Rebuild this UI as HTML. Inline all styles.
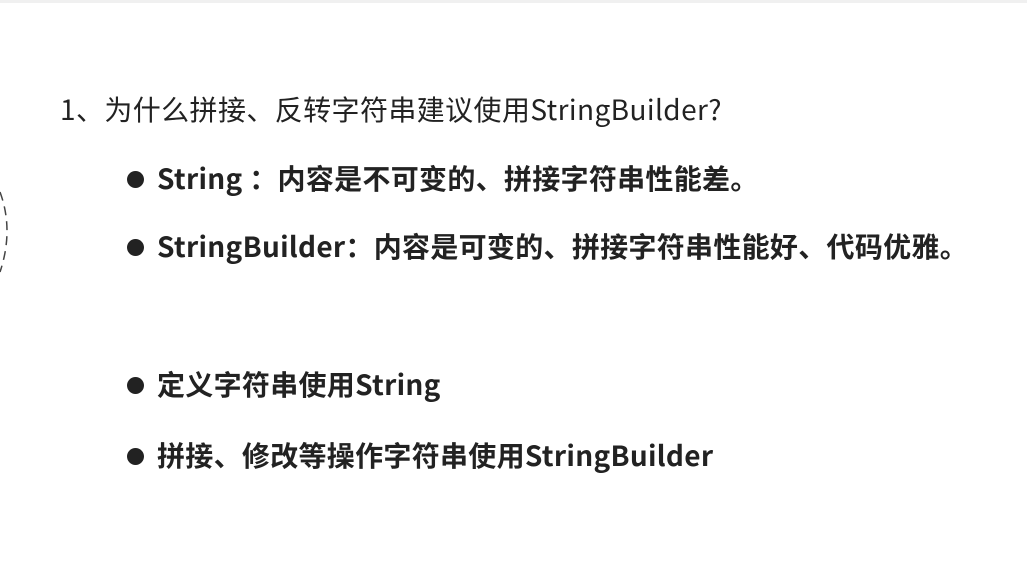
<!DOCTYPE html>
<html><head><meta charset="utf-8"><style>
html,body{margin:0;padding:0;background:#fff;width:1027px;height:565px;overflow:hidden;position:relative}
.t{position:absolute;left:60px;top:89px;font:28px "Noto Sans CJK SC",sans-serif;line-height:40px;color:#222;white-space:nowrap;letter-spacing:0.4px}
.b{position:absolute;left:157px;font:bold 28px "Noto Sans CJK SC",sans-serif;line-height:40px;color:#222;white-space:nowrap;letter-spacing:0.3px}
.d{position:absolute;left:127px;width:17px;height:17px;border-radius:50%;background:#222}
.top{position:absolute;left:0;top:0;width:1027px;height:3px;background:#f0f0f0}
</style></head><body>
<div class="top"></div>
<svg style="position:absolute;left:0;top:180px" width="20" height="100"><path d="M0 12 Q14 50 0 92" fill="none" stroke="#444" stroke-width="1.5" stroke-dasharray="9 6"/></svg>
<div class="t">1、为什么拼接、反转字符串建议使用StringBuilder?</div>
<div class="d" style="top:171px"></div><div class="b" style="top:158px">String ：内容是不可变的、拼接字符串性能差。</div>
<div class="d" style="top:239px"></div><div class="b" style="top:226px">StringBuilder：内容是可变的、拼接字符串性能好、代码优雅。</div>
<div class="d" style="top:377px"></div><div class="b" style="top:364px">定义字符串使用String</div>
<div class="d" style="top:448px"></div><div class="b" style="top:435px">拼接、修改等操作字符串使用StringBuilder</div>
</body></html>
